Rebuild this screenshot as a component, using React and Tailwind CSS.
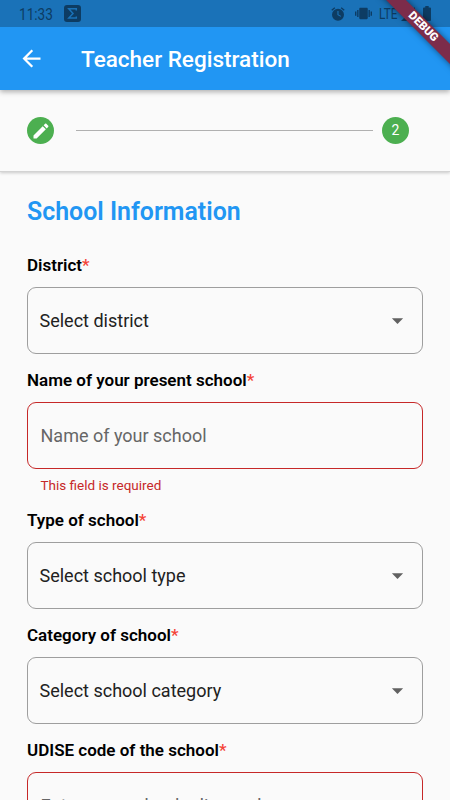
import React from 'react';

const fields = [
  { label: 'District', text: 'Select district', type: 'select' },
  { label: 'Name of your present school', text: 'Name of your school', type: 'input', error: 'This field is required' },
  { label: 'Type of school', text: 'Select school type', type: 'select' },
  { label: 'Category of school', text: 'Select school category', type: 'select' },
  { label: 'UDISE code of the school', text: 'Enter your school udise code', type: 'input', error: 'This field is required' },
];

function StatusBar() {
  return (
    <div className="flex h-[27px] items-center bg-[#1a72b8] pl-[19px] pr-[19px] text-[#0d3c63]">
      <span className="w-[34px] origin-left scale-x-[0.85] pt-px text-[16px] leading-[27px]">11:33</span>
      <svg className="ml-[11px] h-[17px] w-[17px]" viewBox="0 0 17 17">
        <rect width="17" height="17" rx="3" fill="#0d3c63" />
        <path d="M12.3 5.500V3.800H4.800L9 8.400l-4.200 4.700h7.500v-1.700" fill="none" stroke="#1a72b8" strokeWidth="1.5" />
      </svg>
      <div className="ml-auto flex items-center">
        <svg className="h-[16px] w-[16px]" viewBox="0 0 24 24" fill="currentColor">
          <path d="M22 5.72l-4.6-3.86-1.29 1.53 4.6 3.86L22 5.72zM7.88 3.39L6.6 1.86 2 5.71l1.29 1.53 4.59-3.85zM12 4a9 9 0 1 0 0 18 9 9 0 0 0 0-18zm.8 8.6l4 2.4-.8 1.3-4.9-2.9V7.5h1.7z" />
        </svg>
        <svg className="ml-[9px] h-[17px] w-[17px]" viewBox="0 0 24 24" fill="currentColor">
          <path d="M0 15h2V9H0v6zm3 2h2V7H3v10zm19-8v6h2V9h-2zm-3 8h2V7h-2v10zM16.500 4h-9C6.670 4 6 4.670 6 5.500v13c0 .83.67 1.500 1.500 1.500h9c.83 0 1.500-.67 1.500-1.500v-13c0-.83-.67-1.500-1.500-1.500z" />
        </svg>
        <span className="ml-[7px] w-[20px] origin-left scale-x-[0.76] text-[15.500px] leading-[28px]">LTE</span>
        <svg className="ml-[2px] h-[14px] w-[14px]" viewBox="0 0 14 14" fill="currentColor">
          <path d="M0 14L14 0v14z" />
        </svg>
        <svg className="ml-[8px] h-[15px] w-[8px]" viewBox="0 0 8 15" fill="currentColor">
          <path d="M2.300 0h3.400v1.500H7a1 1 0 0 1 1 1V14a1 1 0 0 1-1 1H1a1 1 0 0 1-1-1V2.500a1 1 0 0 1 1-1h1.300z" />
        </svg>
      </div>
    </div>
  );
}

function AppBar() {
  return (
    <header className="flex h-[63px] items-center bg-[#2196f3] pl-[18px] text-white">
      <svg className="h-[27px] w-[27px]" viewBox="0 0 24 24" fill="currentColor">
        <path d="M20 11H7.830l5.590-5.590L12 4l-8 8 8 8 1.410-1.410L7.830 13H20v-2z" />
      </svg>
      <h1 className="ml-[36px] whitespace-nowrap pt-[2px] text-[22.500px] font-medium">Teacher Registration</h1>
    </header>
  );
}

function Stepper() {
  return (
    <div className="flex h-[82px] items-center border-b border-[#d3d3d3] pl-[27px] pr-[41px] shadow-[0_1px_3px_rgba(0,0,0,0.2)]">
      <div className="flex h-[27px] w-[27px] items-center justify-center rounded-full bg-[#4caf50] text-white">
        <svg className="h-[20px] w-[20px]" viewBox="0 0 24 24" fill="currentColor">
          <path d="M3 17.250V21h3.750L17.810 9.940l-3.750-3.750L3 17.250zM20.710 7.040c.39-.39.39-1.020 0-1.410l-2.340-2.340c-.39-.39-1.020-.39-1.410 0l-1.830 1.830 3.750 3.750 1.830-1.830z" />
        </svg>
      </div>
      <div className="ml-[22px] mr-[9px] h-px flex-1 bg-[#b0b0b0]" />
      <div className="flex h-[27px] w-[27px] items-center justify-center rounded-full bg-[#4caf50] text-[14px] text-white">2</div>
    </div>
  );
}

function Field({ label, text, type, error }) {
  const isSelect = type === 'select';
  return (
    <div>
      <div className="flex h-[20px] items-center whitespace-nowrap text-[17px] font-semibold text-black">
        {label}
        <span className="font-medium text-[#f44336]">*</span>
      </div>
      <div className={`mt-[11px] flex items-center justify-between rounded-[9px] border pr-[11px] text-[18px] ${isSelect ? 'h-[67px] border-[#9e9e9e] pl-[11.500px] text-[#212121]' : 'h-[66.500px] border-[#c62828] pl-[12.500px] text-[#666666]'}`}>
        <span>{text}</span>
        {isSelect && (
          <svg className="h-[27px] w-[27px]" viewBox="0 0 24 24" fill="#616161">
            <path d="M7 10l5 5 5-5z" />
          </svg>
        )}
      </div>
      {error && <p className="ml-[13.500px] mt-[8px] h-[17px] text-[13.500px] leading-[17px] text-[#c62828]">{error}</p>}
    </div>
  );
}

export default function App() {
  return (
    <div className="relative h-[800px] w-[450px] overflow-hidden bg-[#fafafa] font-['Roboto',sans-serif]">
      <div className="relative shadow-[0_2px_5px_rgba(0,0,0,0.3)]">
        <StatusBar />
        <AppBar />
      </div>
      <Stepper />
      <main className="px-[27px] pt-[24px]">
        <h2 className="h-[32px] whitespace-nowrap text-[24.900px] font-semibold leading-[32px] text-[#2196f3]">School Information</h2>
        <div className="mt-[28px] flex flex-col gap-[17.150px]">
          {fields.map((field) => (
            <Field key={field.label} {...field} />
          ))}
        </div>
      </main>
      <div className="absolute left-[363px] top-[20px] flex h-[14px] w-[120px] rotate-45 items-center justify-center bg-[#7c2c4a] text-[11.500px] font-black text-white shadow-[0_0_6px_rgba(0,0,0,0.5)]">
        DEBUG
      </div>
    </div>
  );
}
